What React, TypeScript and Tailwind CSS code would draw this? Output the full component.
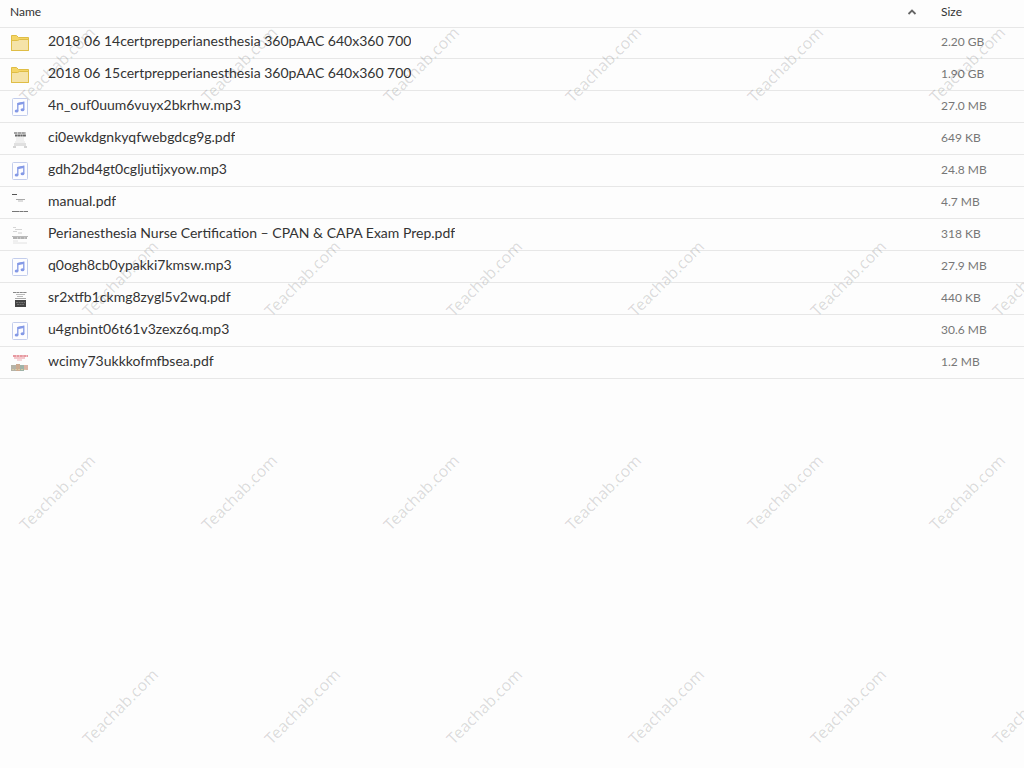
import type { ReactNode } from "react";

type FileEntry = {
    name: string;
    size: string;
    icon: ReactNode;
};

function FolderIcon() {
    return (
        <svg viewBox="0 0 20 18" className="h-[18px] w-5" aria-hidden="true">
            <path d="M1.5 16.5v-15h5l2 2h10v13z" fill="#f5d566" stroke="#dfbd45" />
            <path d="M1.5 6.5h6l2-1h9v11h-17z" fill="#f5e3a8" stroke="#dfbd45" />
        </svg>
    );
}

function AudioIcon() {
    return (
        <svg viewBox="0 0 20 18" className="h-[18px] w-5" aria-hidden="true">
            <rect x="2.5" y=".5" width="15" height="17" rx="1" fill="#fdfdff" stroke="#c3cdec" />
            <path d="M7.8 13V5.6l6-1.3v7.4" fill="none" stroke="#8499e6" strokeWidth="1.3" />
            <path d="M7.8 5l6-1.3v2.2l-6 1.3z" fill="#8499e6" />
            <ellipse cx="6.6" cy="13.1" rx="1.9" ry="1.5" fill="#8499e6" />
            <ellipse cx="12.5" cy="11.8" rx="1.9" ry="1.5" fill="#8499e6" />
        </svg>
    );
}

// Tiny first-page previews of the PDF files
function Thumbnail({ children }: { children: ReactNode }) {
    return (
        <svg viewBox="0 0 20 20" className="h-5 w-5" aria-hidden="true">
            {children}
        </svg>
    );
}

const chartThumb = (
    <Thumbnail>
        <path d="M4 4h12" stroke="#888" strokeWidth="1.4" strokeDasharray="3 .5 4 .4" />
        <path d="M5 6.5h11" stroke="#666" strokeWidth="2" strokeDasharray="2 .3 3 .3" />
        <path d="M6 9h8M6 11h8M5 13h10" stroke="#e2e2e2" />
        <path d="M4 14h12v3H4z" fill="#e0e0e0" />
        <path d="M3 17h3v2H3zM14 17h3v2h-3z" fill="#d4d4d4" />
    </Thumbnail>
);

const manualThumb = (
    <Thumbnail>
        <path d="M2 1.5h5" stroke="#555" />
        <path d="M6 6.5h9" stroke="#aaa" />
        <path d="M8 8h5" stroke="#bbb" />
        <path d="M2 18.5h16" stroke="#777" strokeDasharray="7 .4 4 .3" />
    </Thumbnail>
);

const nurseThumb = (
    <Thumbnail>
        <path d="M3 2.5h3M5 4.5h7M3 6.5h4" stroke="#d5d5d5" />
        <path d="M8 8h4" stroke="#ccc" />
        <path d="M2 11.5h16" stroke="#bbb" />
        <path d="M3 13h14" stroke="#999" strokeWidth="1.3" strokeDasharray="4 .4 3 .3" />
        <path d="M3 16h5M3 18h14" stroke="#e2e2e2" />
    </Thumbnail>
);

const coverThumb = (
    <Thumbnail>
        <path d="M3 3.5h14" stroke="#888" strokeDasharray="3 .4" />
        <path d="M6 5.5h9M7 7.5h6" stroke="#bbb" />
        <path d="M5 9.5h11" stroke="#aaa" />
        <path d="M5 11h11v7H5z" fill="#444" />
        <path d="M6 13.5h9M7 15.5h7" stroke="#888" strokeWidth=".7" strokeDasharray="2 .6" />
    </Thumbnail>
);

const photoThumb = (
    <Thumbnail>
        <path d="M3 3h15" stroke="#df7881" strokeWidth="1.3" strokeDasharray="3 .4" />
        <path d="M4 5h11" stroke="#e9929b" />
        <path d="M7 7h5" stroke="#eeb0b5" />
        <path d="M1 12h5v6H1z" fill="#b5b3a7" />
        <path d="M6 11h4v7H6z" fill="#cbaa90" />
        <path d="M10 12h4v6h-4z" fill="#9fb3a8" />
        <path d="M14 12h4v5h-4z" fill="#dcb3a4" />
        <path d="M2 16.5h14" stroke="#d8c9a3" strokeDasharray="2 1" />
    </Thumbnail>
);

const files: FileEntry[] = [
    { name: "2018 06 14certprepperianesthesia 360pAAC 640x360 700", size: "2.20 GB", icon: <FolderIcon /> },
    { name: "2018 06 15certprepperianesthesia 360pAAC 640x360 700", size: "1.90 GB", icon: <FolderIcon /> },
    { name: "4n_ouf0uum6vuyx2bkrhw.mp3", size: "27.0 MB", icon: <AudioIcon /> },
    { name: "ci0ewkdgnkyqfwebgdcg9g.pdf", size: "649 KB", icon: chartThumb },
    { name: "gdh2bd4gt0cgljutijxyow.mp3", size: "24.8 MB", icon: <AudioIcon /> },
    { name: "manual.pdf", size: "4.7 MB", icon: manualThumb },
    { name: "Perianesthesia Nurse Certification – CPAN & CAPA Exam Prep.pdf", size: "318 KB", icon: nurseThumb },
    { name: "q0ogh8cb0ypakki7kmsw.mp3", size: "27.9 MB", icon: <AudioIcon /> },
    { name: "sr2xtfb1ckmg8zygl5v2wq.pdf", size: "440 KB", icon: coverThumb },
    { name: "u4gnbint06t61v3zexz6q.mp3", size: "30.6 MB", icon: <AudioIcon /> },
    { name: "wcimy73ukkkofmfbsea.pdf", size: "1.2 MB", icon: photoThumb },
];

const watermarkRows = [0, 1, 2, 3];
const watermarkColumns = [0, 1, 2, 3, 4, 5];

function Watermark() {
    return (
        <svg className="pointer-events-none absolute inset-0 h-full w-full" aria-hidden="true">
            {watermarkRows.map((row) =>
                watermarkColumns.map((column) => {
                    // Every other row is shifted to the right
                    const x = 58 + column * 182 + (row % 2) * 63;
                    const y = 65 + row * 214;
                    return (
                        <text
                            key={`${row}-${column}`}
                            x={x}
                            y={y}
                            dy="5"
                            textAnchor="middle"
                            transform={`rotate(-45 ${x} ${y})`}
                            className="fill-black/14 font-['Noto_Sans',sans-serif] text-[16px]"
                        >
                            Teachab.com
                        </text>
                    );
                }),
            )}
        </svg>
    );
}

export default function App() {
    return (
        <main className="relative min-h-screen overflow-hidden bg-[#fdfdfd] font-[Lato,sans-serif] text-[#333]">
            <table className="w-full table-fixed border-separate border-spacing-0 text-left">
                <thead>
                    <tr className="h-[27px] text-xs">
                        <th scope="col" aria-sort="ascending" className="p-0 font-normal">
                            <button type="button" className="flex w-full items-center justify-between pr-[14px] pb-[3px] pl-[10px]">
                                <span>Name</span>
                                <svg viewBox="0 0 10 8" className="h-2 w-[10px]" aria-hidden="true">
                                    <path d="M1.5 6L5 2.5 8.5 6" fill="none" stroke="#666" strokeWidth="1.8" />
                                </svg>
                            </button>
                        </th>
                        <th scope="col" className="w-[93px] p-0 font-normal">
                            <button type="button" className="flex w-full pb-[3px] pl-[10px]">Size</button>
                        </th>
                    </tr>
                </thead>
                <tbody className="[&>tr:first-child>td]:border-t">
                    {files.map((file) => (
                        <tr key={file.name} className="h-8">
                            <td className="border-b border-[#e7e7e7] p-0">
                                <div className="flex items-center gap-[18px] pl-[10px]">
                                    <span className="flex h-5 w-5 shrink-0 items-center">{file.icon}</span>
                                    <span className="truncate pb-1 text-sm">{file.name}</span>
                                </div>
                            </td>
                            <td className="border-b border-[#e7e7e7] p-0 pb-0.5 pl-[10px] text-xs text-[#777]">{file.size}</td>
                        </tr>
                    ))}
                </tbody>
            </table>
            <Watermark />
        </main>
    );
}
